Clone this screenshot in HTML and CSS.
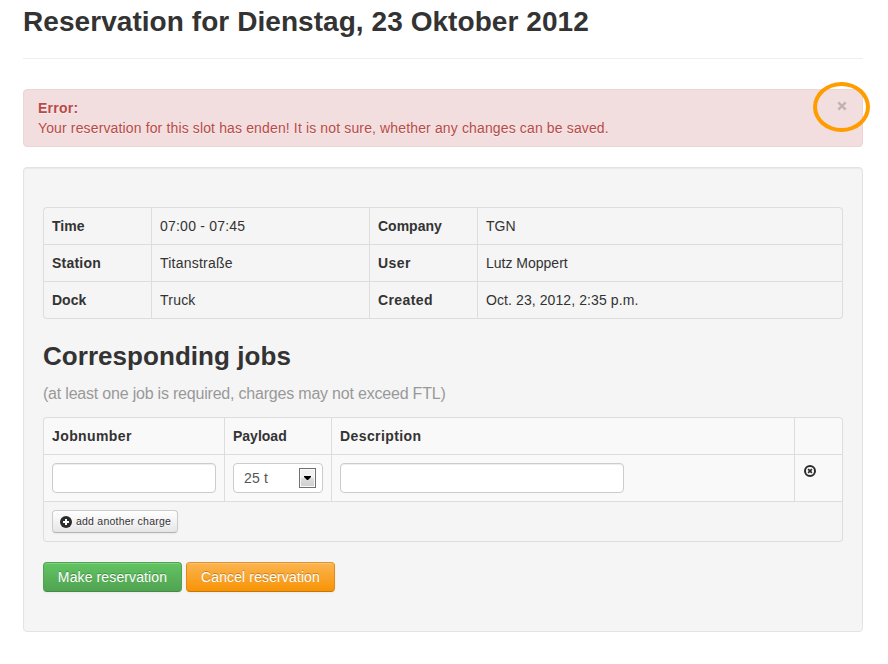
FILE: index.html
```html
<!DOCTYPE html>
<html lang="en">
<head>
<meta charset="utf-8">
<title>Reservation</title>
<link rel="stylesheet" href="styles.css">
</head>
<body>
<main class="container">
  <header class="page-header">
    <h1>Reservation for Dienstag, 23 Oktober 2012</h1>
  </header>
  <div class="alert">
    <strong>Error:</strong>
    <p>Your reservation for this slot has enden! It is not sure, whether any changes can be saved.</p>
    <svg class="close" viewBox="0 0 10 10"><path d="M1.3 1.3 8.7 8.7M8.7 1.3 1.3 8.7"/></svg>
    <span class="ring"></span>
  </div>
  <section class="well">
    <table class="table">
      <colgroup><col class="c-label"><col class="c-value"><col class="c-label"><col></colgroup>
      <tr><th>Time</th><td class="loose">07:00 - 07:45</td><th>Company</th><td>TGN</td></tr>
      <tr><th class="loose">Station</th><td class="loose">Titanstraße</td><th class="wide">User</th><td>Lutz Moppert</td></tr>
      <tr><th>Dock</th><td class="loose">Truck</td><th class="wide">Created</th><td class="snug">Oct. 23, 2012, 2:35 p.m.</td></tr>
    </table>
    <h2>Corresponding jobs</h2>
    <p class="hint">(at least one job is required, charges may not exceed FTL)</p>
    <table class="table jobs">
      <colgroup><col class="c-job"><col class="c-payload"><col><col class="c-remove"></colgroup>
      <tr class="striped"><th class="wide">Jobnumber</th><th>Payload</th><th class="wide">Description</th><th></th></tr>
      <tr class="striped">
        <td><input class="field job" type="text"></td>
        <td><div class="field select"><span class="loose">25 t</span><span class="arrow"><svg width="7" height="4" viewBox="0 0 7 4"><path d="M0 0H7V1L4 4H3L0 1Z"/></svg></span></div></td>
        <td><input class="field description" type="text"></td>
        <td><svg class="remove" width="12" height="12" viewBox="0 0 12 12"><circle cx="6" cy="6" r="5"/><path d="M4.1 4.1 7.9 7.9M7.9 4.1 4.1 7.9"/></svg></td>
      </tr>
      <tr><td colspan="4"><button class="btn btn-mini"><svg width="12" height="12" viewBox="0 0 12 12"><circle cx="6" cy="6" r="6"/><path d="M6 3V9M3 6H9"/></svg><span>add another charge</span></button></td></tr>
    </table>
    <div class="actions">
      <button class="btn btn-success">Make reservation</button>
      <button class="btn btn-warning">Cancel reservation</button>
    </div>
  </section>
</main>
</body>
</html>
```
FILE: styles.css
```css
* { box-sizing: border-box; }
body {
  margin: 0;
  background: #fff;
  color: #333;
  font: 14px/20px "Liberation Sans", Arial, sans-serif;
}
h1, h2, p { margin: 0; }
.container { width: 840px; margin-left: 23px; }
.page-header { height: 59px; margin-bottom: 30px; padding-top: 2px; border-bottom: 1px solid #eee; }
h1 { font-size: 28px; line-height: 40px; letter-spacing: .06px; white-space: nowrap; }
.alert {
  position: relative;
  height: 58px;
  margin-bottom: 20px;
  padding: 8px 14px;
  border: 1px solid #eed3d7;
  border-radius: 4px;
  background: #f2dede;
  color: #b94a48;
  letter-spacing: .138px;
  text-shadow: 0 1px 0 rgba(255, 255, 255, .5);
}
.alert strong { display: block; letter-spacing: .25px; }
.close { position: absolute; top: 11px; right: 15px; width: 10px; height: 10px; stroke: #c2b2b2; stroke-width: 2.5; fill: none; }
.ring {
  position: absolute;
  top: -8px;
  right: -8px;
  width: 57px;
  height: 50px;
  border: 4px solid #ff9c00;
  border-radius: 50%;
}
.well {
  height: 465px;
  padding: 39px 19px 0;
  border: 1px solid #e3e3e3;
  border-radius: 4px;
  background: #f5f5f5;
  box-shadow: inset 0 1px 1px rgba(0, 0, 0, .05);
}
.table {
  width: 800px;
  table-layout: fixed;
  border: 1px solid #ddd;
  border-width: 0 1px 1px 0;
  border-radius: 4px;
  border-collapse: separate;
  border-spacing: 0;
}
.table th, .table td {
  padding: 8px;
  border-top: 1px solid #ddd;
  border-left: 1px solid #ddd;
  text-align: left;
  vertical-align: top;
}
.table tr:first-child > :first-child { border-top-left-radius: 4px; }
.table tr:first-child > :last-child { border-top-right-radius: 4px; }
.table tr:last-child > :first-child { border-bottom-left-radius: 4px; }
.snug { letter-spacing: .09px; }
.loose { letter-spacing: .22px; }
.wide { letter-spacing: .4px; }
.c-label { width: 108px; }
.c-value { width: 218px; }
.c-job { width: 181px; }
.c-payload { width: 107px; }
.c-remove { width: 48px; }
.striped > * { background: #f9f9f9; }
h2 { margin-top: 17px; font-size: 26px; line-height: 40px; letter-spacing: .05px; }
.hint { height: 41px; padding-top: 8px; color: #999; font-size: 16px; letter-spacing: -.205px; white-space: nowrap; }
.field {
  display: block;
  height: 30px;
  border: 1px solid #ccc;
  border-radius: 4px;
  background: #fff;
  color: #555;
  box-shadow: inset 0 1px 1px rgba(0, 0, 0, .075);
}
.job { width: 164px; }
.description { width: 284px; }
.select { display: flex; justify-content: space-between; width: 90px; padding: 4px 6px 4px 10px; box-shadow: none; }
.arrow {
  display: flex;
  align-items: center;
  justify-content: center;
  width: 17px;
  height: 20px;
  border: 1px solid #707070;
  background: linear-gradient(#f2f2f2 50%, #ddd 50%, #cfcfcf);
  box-shadow: inset 0 0 0 1px #fafafa;
}
.remove { display: block; margin: 2px 0 0 1px; fill: none; stroke: #2c2c2c; stroke-width: 2; }
.remove path { stroke-width: 1.6; }
.btn {
  height: 30px;
  padding: 4px 0;
  border: 1px solid;
  border-radius: 4px;
  color: #fff;
  font: 14px/20px "Liberation Sans", Arial, sans-serif;
  letter-spacing: .12px;
  white-space: nowrap;
  text-shadow: 0 -1px 0 rgba(0, 0, 0, .25);
  box-shadow: inset 0 1px 0 rgba(255, 255, 255, .2), 0 1px 2px rgba(0, 0, 0, .05);
}
.btn-mini {
  display: flex;
  align-items: center;
  gap: 4px;
  width: 126px;
  height: 23px;
  padding: 0 0 0 7px;
  border-color: #ccc #ccc #b3b3b3;
  background: linear-gradient(#fff, #e6e6e6);
  color: #333;
  font-size: 10.5px;
  letter-spacing: .22px;
  text-shadow: 0 1px 1px rgba(255, 255, 255, .75);
}
.btn-mini span { margin-top: -2px; }
.btn-mini svg { fill: #2c2c2c; stroke: #fff; stroke-width: 2; }
.btn-mini circle { stroke: none; }
.actions { display: flex; gap: 4px; margin-top: 20px; }
.btn-success { width: 139px; border-color: #51a351 #51a351 #458b45; background: linear-gradient(#62c462, #51a351); }
.btn-warning { width: 149px; border-color: #e0932a #e08a18 #c67605; background: linear-gradient(#fbb450, #f89406); }
```
